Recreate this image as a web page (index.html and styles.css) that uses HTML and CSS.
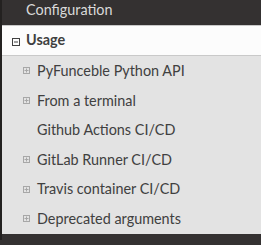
FILE: index.html
```html
<!doctype html>
<html lang="en">
  <head>
    <meta charset="UTF-8" />
    <meta name="viewport" content="width=device-width, initial-scale=1.0" />
    <title>Docs navigation</title>
    <link rel="stylesheet" href="styles.css">
  </head>
  <body>
    <nav class="side-nav">
      <ul class="menu">
        <li class="l1"><a href="#">Configuration</a></li>
        <li class="l1 current">
          <a href="#" class="current-link">
            <svg class="toggle" width="8" height="8" viewBox="0 0 8 8">
              <rect x="0.5" y="0.5" width="7" height="7" fill="none" stroke="currentColor" />
              <path d="M2 4h4" stroke="currentColor" />
            </svg>
            Usage
          </a>
          <ul class="sub">
            <li class="l2"><a href="#"><svg class="toggle" width="7" height="7" viewBox="0 0 7 7"><rect x="0.5" y="0.5" width="6" height="6" fill="none" stroke="currentColor" /><path d="M1.5 3.5h4M3.5 1.5v4" stroke="currentColor" /></svg>PyFunceble Python API</a></li>
            <li class="l2"><a href="#"><svg class="toggle" width="7" height="7" viewBox="0 0 7 7"><rect x="0.5" y="0.5" width="6" height="6" fill="none" stroke="currentColor" /><path d="M1.5 3.5h4M3.5 1.5v4" stroke="currentColor" /></svg>From a terminal</a></li>
            <li class="l2"><a href="#">Github Actions CI/CD</a></li>
            <li class="l2"><a href="#"><svg class="toggle" width="7" height="7" viewBox="0 0 7 7"><rect x="0.5" y="0.5" width="6" height="6" fill="none" stroke="currentColor" /><path d="M1.5 3.5h4M3.5 1.5v4" stroke="currentColor" /></svg>GitLab Runner CI/CD</a></li>
            <li class="l2"><a href="#"><svg class="toggle" width="7" height="7" viewBox="0 0 7 7"><rect x="0.5" y="0.5" width="6" height="6" fill="none" stroke="currentColor" /><path d="M1.5 3.5h4M3.5 1.5v4" stroke="currentColor" /></svg>Travis container CI/CD</a></li>
            <li class="l2"><a href="#"><svg class="toggle" width="7" height="7" viewBox="0 0 7 7"><rect x="0.5" y="0.5" width="6" height="6" fill="none" stroke="currentColor" /><path d="M1.5 3.5h4M3.5 1.5v4" stroke="currentColor" /></svg>Deprecated arguments</a></li>
          </ul>
        </li>
      </ul>
    </nav>
  </body>
</html>
```
FILE: styles.css
```css
html,
body {
  margin: 0;
  height: 100%;
  background: #343131;
  overflow: hidden;
}
.side-nav {
  border-left: 2px solid #232120;
  height: 100%;
  font-family: 'Lato', 'Noto Sans', sans-serif;
  font-size: 14.4px;
}
.menu,
.sub {
  list-style: none;
  margin: 0;
  padding: 0;
}
.menu {
  margin-top: -5px;
}
.menu a {
  display: block;
  position: relative;
  line-height: 18px;
  padding: 5.8px 0 5.8px 24px;
  color: #d9d9d9;
  text-decoration: none;
  white-space: nowrap;
}
.current {
  background: #e3e3e3;
}
.current-link {
  background: #fcfcfc;
  border-top: 1px solid #c9c9c9;
  border-bottom: 1px solid #c9c9c9;
  font-weight: 700;
}
.menu .current-link {
  color: #404040;
}
.current-link .toggle {
  position: absolute;
  left: 10px;
  top: 12px;
  color: #404040;
}
.sub .l2 a {
  color: #404040;
  padding-left: 35px;
}
.sub .toggle {
  position: absolute;
  left: 21px;
  top: 11px;
  color: #a7a7a7;
}
```
